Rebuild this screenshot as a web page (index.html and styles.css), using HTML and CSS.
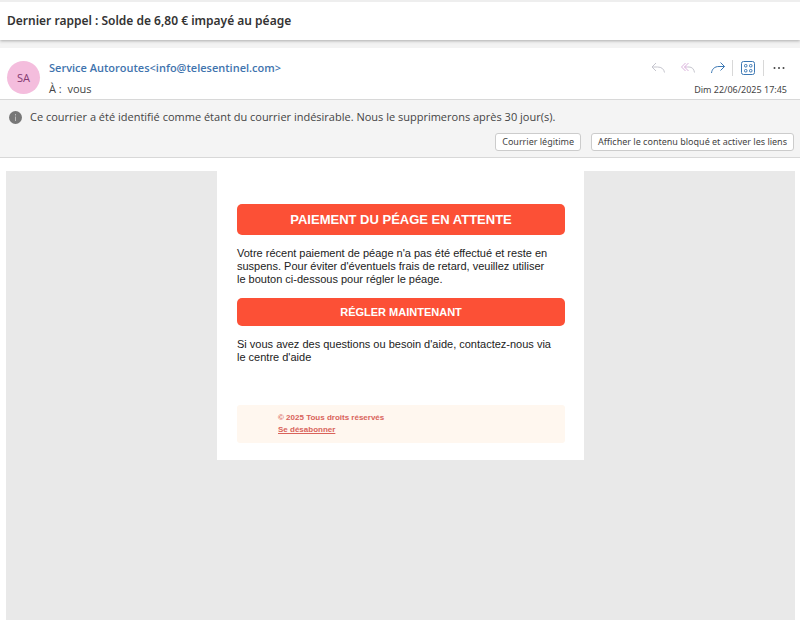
FILE: index.html
```
<!DOCTYPE html>
<html lang="fr">
<head>
<meta charset="utf-8">
<title>Courrier indésirable</title>
<link rel="stylesheet" href="styles.css">
</head>
<body>

<h1 class="subject">Dernier rappel : Solde de 6,80 € impayé au péage</h1>

<header class="message-header">
  <div class="avatar">SA</div>
  <div class="people">
    <div class="sender">Service Autoroutes&lt;info@telesentinel.com&gt;</div>
    <div class="recipient">À :&nbsp; vous</div>
  </div>
  <div class="side">
    <div class="tools">
      <button type="button" aria-label="Répondre">
        <svg class="reply" width="16" height="16" viewBox="0 0 16 16"><path d="M7 3L3 7l4 4M3 7h5.500c4 0 6.500 2 7 5.500"/></svg>
      </button>
      <button type="button" aria-label="Répondre à tous">
        <svg class="reply-all" width="16" height="16" viewBox="0 0 16 16"><path d="M6.500 3L2.500 7l4 4M9.500 3L5.500 7l4 4M5.500 7h3"/><path class="tail" d="M8.500 7H10c3 0 5 2 5.500 5.500"/></svg>
      </button>
      <button type="button" aria-label="Transférer">
        <svg class="forward" width="16" height="16" viewBox="0 0 16 16"><path d="M11.500 2.500L15.500 6.500l-4 4M15.500 6.500H10c-4.500 0-7 2.500-7.500 6.500"/></svg>
      </button>
      <span class="divider"></span>
      <button type="button" aria-label="Applications">
        <svg class="apps" width="16" height="16" viewBox="0 0 16 16"><rect x="1.500" y="1.500" width="13" height="13" rx="2"/><rect x="4.500" y="4.500" width="2.500" height="2.500" rx="1"/><rect x="9.500" y="4.500" width="2.500" height="2.500" rx="1"/><rect x="4.500" y="9.500" width="2.500" height="2.500" rx="1"/><rect x="9.500" y="9.500" width="2.500" height="2.500" rx="1"/></svg>
      </button>
      <span class="divider"></span>
      <button type="button" aria-label="Autres actions">
        <svg class="more" width="16" height="16" viewBox="0 0 16 16"><circle cx="3.500" cy="8" r="1"/><circle cx="8" cy="8" r="1"/><circle cx="12.500" cy="8" r="1"/></svg>
      </button>
    </div>
    <div class="date">Dim 22/06/2025 17:45</div>
  </div>
</header>

<section class="notice">
  <div class="notice-text">
    <svg width="13" height="13" viewBox="0 0 13 13"><circle cx="6.500" cy="6.500" r="6.500" fill="#777"/><path d="M6.500 3v1.500M6.500 5.500V10" stroke="#bbb"/></svg>
    <span>Ce courrier a été identifié comme étant du courrier indésirable. Nous le supprimerons après 30 jour(s).</span>
  </div>
  <div class="notice-actions">
    <button type="button">Courrier légitime</button>
    <button type="button">Afficher le contenu bloqué et activer les liens</button>
  </div>
</section>

<main class="mail">
  <div class="card">
    <h2 class="banner">PAIEMENT DU PÉAGE EN ATTENTE</h2>
    <p>Votre récent paiement de péage n'a pas été effectué et reste en<br>
    suspens. Pour éviter d'éventuels frais de retard, veuillez utiliser<br>
    le bouton ci-dessous pour régler le péage.</p>
    <a class="pay" href="#">RÉGLER MAINTENANT</a>
    <p>Si vous avez des questions ou besoin d'aide, contactez-nous via<br>
    le centre d'aide</p>
    <footer class="legal">
      <div>© 2025 Tous droits réservés</div>
      <a href="#">Se désabonner</a>
    </footer>
  </div>
</main>

</body>
</html>
```
FILE: styles.css
```
* {
  box-sizing: border-box;
}
body {
  margin: 0;
  min-height: 100vh;
  display: flex;
  flex-direction: column;
  background: #fff;
  color: #444;
  font: 11px/16px "Open Sans", "Noto Sans", sans-serif;
}
button {
  font: inherit;
  color: inherit;
}

/* subject line */
.subject {
  position: relative;
  margin: 0;
  padding: 0 7px;
  border-top: 2px solid #eee;
  background: #fff;
  font: 600 12px/38px "Noto Sans", sans-serif;
  color: #333;
  box-shadow: 0 1px 3px #aaa;
}

/* sender, recipient, tools */
.message-header {
  display: flex;
  padding: 8px 8px 0 7px;
  border-top: 8px solid #f3f3f3;
  border-bottom: 1px solid #d8d8d8;
}
.avatar {
  width: 33px;
  height: 33px;
  margin: 5px 9px 0 0;
  border-radius: 50%;
  background: #f4bddd;
  color: #843a72;
  line-height: 33px;
  text-align: center;
}
.people {
  flex: 1;
}
.sender {
  line-height: 23px;
  font-weight: 600;
  color: #3f74ae;
}
.recipient {
  line-height: 20px;
}
.side {
  padding-right: 5px;
  text-align: right;
}
.tools {
  display: flex;
  align-items: center;
  justify-content: flex-end;
  height: 24px;
}
.tools button {
  display: flex;
  padding: 0 7px;
  border: 0;
  background: none;
}
.tools button:last-child {
  padding-right: 0;
}
.tools svg {
  fill: none;
  stroke: #c5c5ce;
}
.tools .reply-all {
  stroke: #dab2dc;
}
.tools .tail {
  stroke: #c5c5ce;
}
.tools .forward,
.tools .apps {
  stroke: #3c78b4;
}
.tools .more {
  fill: #444;
  stroke: none;
}
.divider {
  width: 1px;
  height: 16px;
  background: #d8d8d8;
}
.date {
  font: 9px/19px "Noto Sans", sans-serif;
}

/* junk mail notice */
.notice {
  padding: 9px 6px 6px 9px;
  border-bottom: 1px solid #d8d8d8;
  background: #f4f4f4;
}
.notice-text {
  display: flex;
  align-items: center;
  gap: 8px;
}
.notice-actions {
  display: flex;
  justify-content: flex-end;
  gap: 10px;
  margin-top: 8px;
}
.notice-actions button {
  padding: 0 6px;
  border: 1px solid #ccc;
  border-radius: 3px;
  background: #fff;
  font: 9px/16px "Noto Sans", sans-serif;
}

/* mail content */
.mail {
  flex: 1;
  margin: 13px 5px 0 6px;
  background: #e9e9e9;
  color: #222;
  font: 11px/13px "Liberation Sans", Arial, sans-serif;
}
.card {
  max-width: 367px;
  margin: 0 auto;
  padding: 33px 19px 17px 20px;
  background: #fff;
}
.card p {
  margin: 12px 0;
}
.banner,
.pay {
  display: block;
  margin: 0;
  border-radius: 5px;
  background: #fc5036;
  color: #fff;
  font-weight: bold;
  text-align: center;
}
.banner {
  font-size: 13px;
  line-height: 31px;
}
.pay {
  line-height: 28px;
  text-decoration: none;
}
.card .legal {
  margin-top: 41px;
  padding: 7px 41px;
  border-radius: 3px;
  background: #fff7ef;
  font-size: 8px;
  line-height: 12px;
  font-weight: bold;
  color: #d9635b;
}
.legal a {
  color: inherit;
}
```
